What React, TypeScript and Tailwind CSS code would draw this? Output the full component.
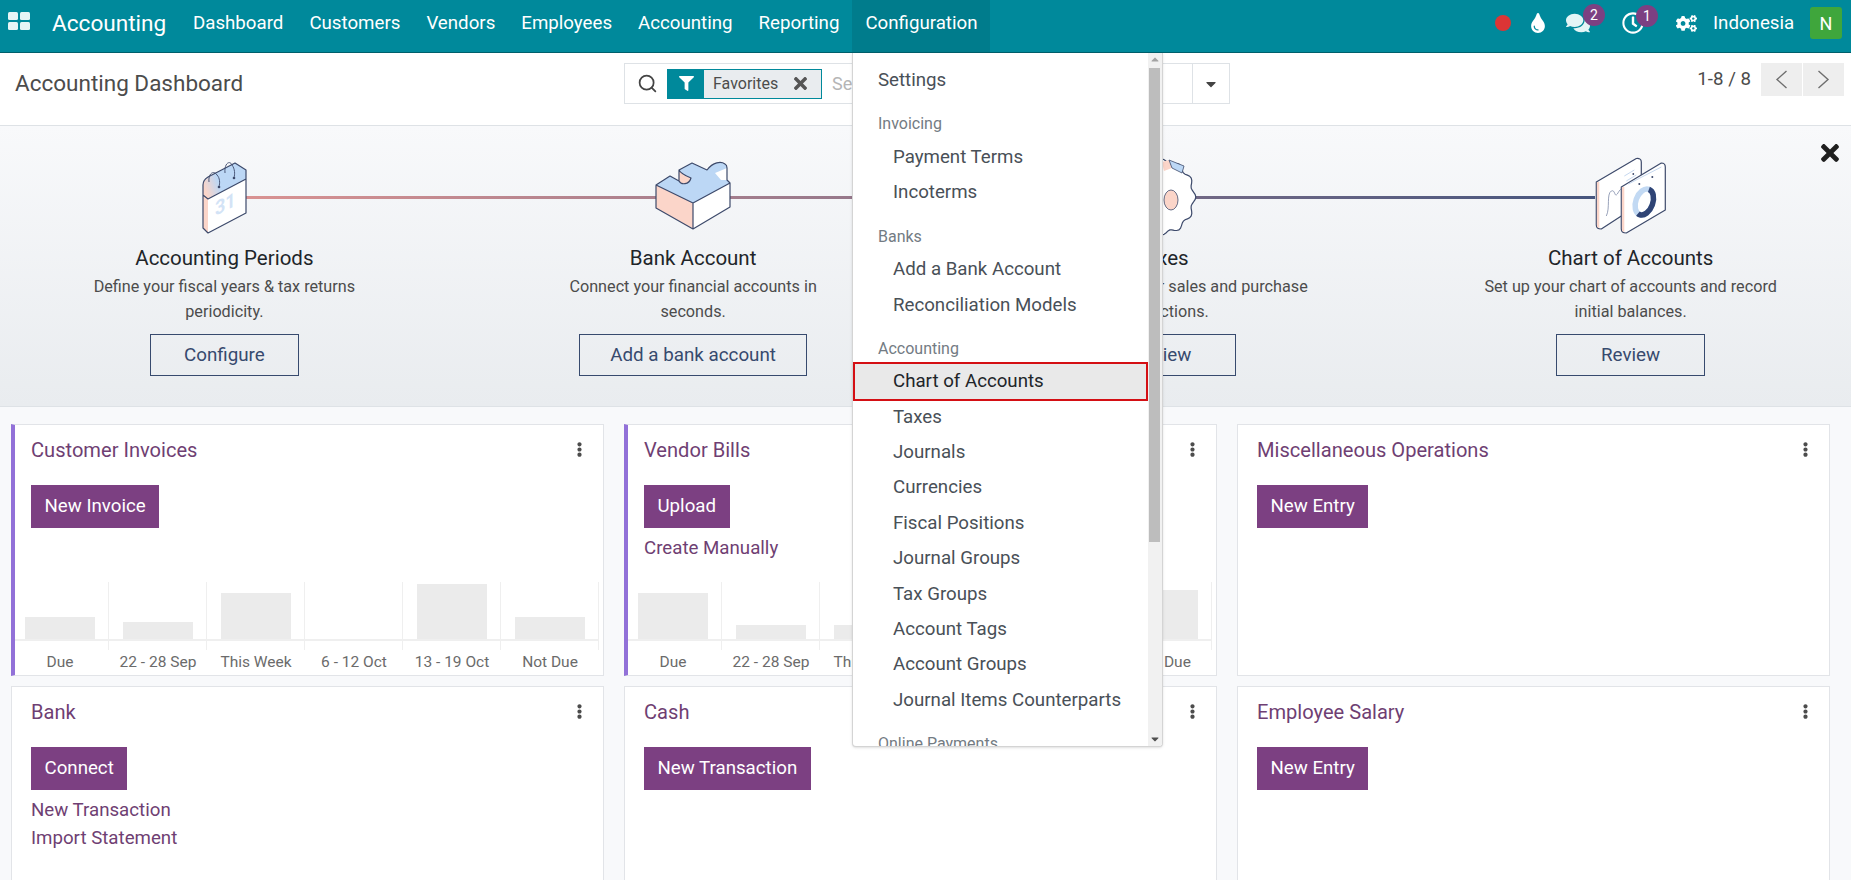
import { FaCaretDown, FaCogs, FaComments, FaEllipsisV, FaFilter, FaRegClock, FaTimes, FaTint } from "react-icons/fa";
import { Search } from "lucide-react";

const navItems = ["Dashboard", "Customers", "Vendors", "Employees", "Accounting", "Reporting"];

// gear outline for the Taxes step, mostly hidden behind the menu
const gearPath =
  Array.from({ length: 96 }, (_, i) => {
    const t = (i / 96) * Math.PI * 2;
    const r = 1 + 0.055 * Math.cos(t * 12);
    return `${i === 0 ? "M" : "L"}${(40 + 32 * r * Math.cos(t)).toFixed(1)} ${(39 + 36 * r * Math.sin(t)).toFixed(1)}`;
  }).join(" ") + " Z";

function CalendarArt() {
  return (
    <svg width="80" height="76" viewBox="0 0 80 76" className="relative z-10 overflow-visible">
      <defs>
        <linearGradient id="calBand" x1="0" x2="1" y1="0.6" y2="0.3">
          <stop offset="0" stopColor="#fbd5c9" />
          <stop offset="0.35" stopColor="#bcd7f5" />
        </linearGradient>
      </defs>
      <path d="M19 37 L24 41 L62 21 L62 55 L24 75 L19 70 Z" fill="#fff" />
      <path d="M19 37 L24 41 L24 75 L19 70 Z" fill="#fbd5c9" />
      <path d="M19 37 V27 Q19 22 24 19 L51 5 L62 12 V21 L24 41 Z" fill="url(#calBand)" />
      <path d="M19 37 L24 41 L62 21 M19 37 V70 L24 75 L62 55 V12 L51 5 L24 19 Q19 22 19 27 V37" fill="none" stroke="#3d4a6b" strokeWidth="1.2" strokeLinejoin="round" />
      <path d="M25 24 C24 15 30 12 33 17 C36 20 36 25 35 29" fill="none" stroke="#3d4a6b" strokeWidth="0.9" />
      <path d="M41 15 C40 5 46 2 48 7 C51 11 51 16 50 20" fill="none" stroke="#3d4a6b" strokeWidth="0.9" />
      <circle cx="35" cy="29" r="1.3" fill="#3d4a6b" />
      <circle cx="50" cy="20" r="1.3" fill="#3d4a6b" />
      <text transform="matrix(0.9 -0.45 0 1 31 58)" fontFamily="Roboto, sans-serif" fontSize="20" fontWeight="700" fill="#d3e3f6">31</text>
    </svg>
  );
}

function PuzzleArt() {
  return (
    <svg width="80" height="76" viewBox="0 0 80 76" className="relative z-10 overflow-visible">
      <path d="M3 27 L40 45 V71 L3 50 Z" fill="#fbd5c9" />
      <path d="M40 45 L77 25 V49 L40 71 Z" fill="#fff" />
      <path d="M3 27 L17 18 L26 23 C28 27 36 27 38 20 C33 18 28 16 26 12 L39 5 L54 12 C60 4 68 3 72 6 Q74 7 74 10 V22 L77 25 L40 45 Z" fill="#bcd7f5" />
      <path d="M62 15 L74 10 V22 L68 22 Z" fill="#fff" />
      <path d="M26 12 C28 16 33 18 38 20 C36 27 28 27 26 23 Z" fill="#fbd5c9" />
      <path
        d="M40 45 L3 27 L17 18 L26 23 V12 L39 5 L54 12 C60 4 68 3 72 6 Q74 7 74 10 V22 L77 25 L40 45 V71 M3 27 V50 L40 71 L77 49 V25 M26 23 C28 27 36 27 38 20 C33 18 28 16 26 12"
        fill="none"
        stroke="#3d4a6b"
        strokeWidth="1.2"
        strokeLinejoin="round"
      />
    </svg>
  );
}

function GearArt() {
  return (
    <svg width="80" height="76" viewBox="0 0 80 76" className="relative z-10 overflow-visible">
      <path d={gearPath} fill="#fff" stroke="#3d4a6b" strokeWidth="1.2" />
      <path d="M40 4 L47 2 L50 10 L42 13 Z" fill="#fbd5c9" />
      <path d="M47 2 L62 8 L60 15 L50 10 Z" fill="#bcd7f5" stroke="#3d4a6b" strokeWidth="0.8" />
      <ellipse cx="49" cy="42" rx="7" ry="10" fill="#fbd5c9" stroke="#3d4a6b" strokeWidth="0.8" />
    </svg>
  );
}

function ChartsArt() {
  return (
    <svg width="80" height="76" viewBox="0 0 80 76" className="relative z-10 overflow-visible">
      <g transform="translate(-6.7 0)">
        <path d="M12 24 L52 0.5 Q57 0 57 4 V45 L17 71 Q12 71 12 67 Z" fill="#fff" stroke="#3d4a6b" strokeWidth="1.2" strokeLinejoin="round" />
        <path d="M12.6 24 V67 Q12.6 70 15 70 V24 Z" fill="#fbd5c9" />
        <path d="M22 58 C26 50 22 36 27 33 C31 31 30 40 33 36 C35 33 36 30 39 31" fill="none" stroke="#7f8aa8" strokeWidth="0.8" />
        <path d="M40 18 L50 12 M42 23 L52 17" stroke="#c6d8ef" strokeWidth="1" />
        <circle cx="49" cy="16" r="0.9" fill="#3d4a6b" />
        <path d="M37 29 L77 5 Q81 5 81 9 V52 L42 75 Q37 75 37 71 Z" fill="#fff" stroke="#3d4a6b" strokeWidth="1.2" strokeLinejoin="round" />
        <path d="M37.6 29 V71 Q37.6 74 40 74 V29 Z" fill="#fbd5c9" />
        <path d="M44 26 L77 9" stroke="#c6d8ef" strokeWidth="1" />
        <circle cx="55" cy="26" r="1" fill="#3d4a6b" />
        <circle cx="68" cy="19" r="1" fill="#3d4a6b" />
        <g transform="rotate(20 60 44)">
          <ellipse cx="60" cy="44" rx="8.5" ry="13.5" fill="none" stroke="#c2d9f3" strokeWidth="5.5" />
          <ellipse cx="60" cy="44" rx="8.5" ry="13.5" fill="none" stroke="#2f4475" strokeWidth="5.5" pathLength="100" strokeDasharray="53 47" strokeDashoffset="-75" />
        </g>
      </g>
    </svg>
  );
}

const steps = [
  { title: "Accounting Periods", lines: "Define your fiscal years & tax returns periodicity.", button: "Configure", art: <CalendarArt /> },
  { title: "Bank Account", lines: "Connect your financial accounts in seconds.", button: "Add a bank account", art: <PuzzleArt /> },
  { title: "Taxes", lines: "Set default Taxes for sales and purchase transactions.", button: "Review", art: <GearArt /> },
  { title: "Chart of Accounts", lines: "Set up your chart of accounts and record initial balances.", button: "Review", art: <ChartsArt /> },
];

const labels = ["Due", "22 - 28 Sep", "This Week", "6 - 12 Oct", "13 - 19 Oct", "Not Due"];

type CardData = {
  title: string;
  button: string;
  links?: string[];
  bars?: number[];
  accent?: boolean;
};

const cards: CardData[] = [
  { title: "Customer Invoices", button: "New Invoice", bars: [22, 17, 46, 0, 55, 22], accent: true },
  { title: "Vendor Bills", button: "Upload", links: ["Create Manually"], bars: [46, 14, 14, 0, 0, 49], accent: true },
  { title: "Miscellaneous Operations", button: "New Entry" },
  { title: "Bank", button: "Connect", links: ["New Transaction", "Import Statement"] },
  { title: "Cash", button: "New Transaction" },
  { title: "Employee Salary", button: "New Entry" },
];

type MenuRow = { label: string; kind: "top" | "head" | "item" | "active" };

const menuRows: MenuRow[] = [
  { label: "Settings", kind: "top" },
  { label: "Invoicing", kind: "head" },
  { label: "Payment Terms", kind: "item" },
  { label: "Incoterms", kind: "item" },
  { label: "Banks", kind: "head" },
  { label: "Add a Bank Account", kind: "item" },
  { label: "Reconciliation Models", kind: "item" },
  { label: "Accounting", kind: "head" },
  { label: "Chart of Accounts", kind: "active" },
  { label: "Taxes", kind: "item" },
  { label: "Journals", kind: "item" },
  { label: "Currencies", kind: "item" },
  { label: "Fiscal Positions", kind: "item" },
  { label: "Journal Groups", kind: "item" },
  { label: "Tax Groups", kind: "item" },
  { label: "Account Tags", kind: "item" },
  { label: "Account Groups", kind: "item" },
  { label: "Journal Items Counterparts", kind: "item" },
  { label: "Online Payments", kind: "head" },
];

function TopNav() {
  return (
    <header className="flex h-[53px] items-center border-b border-[#005f6b] bg-[#00899b] text-white">
      <svg width="22" height="18" viewBox="0 0 22 18" className="mb-[10px] ml-[8px] shrink-0" fill="#e6f5f6">
        <rect x="0" y="0" width="10" height="8" rx="1.5" />
        <rect x="12" y="0" width="10" height="8" rx="1.5" />
        <rect x="0" y="10" width="10" height="8" rx="1.5" />
        <rect x="12" y="10" width="10" height="8" rx="1.5" />
      </svg>
      <span className="mb-[5px] ml-[22px] w-[128px] text-[22.6px]">Accounting</span>
      <nav className="flex h-full items-center text-[18.7px]">
        {navItems.map((item) => (
          <span key={item} className="mb-[6px] px-[13px]">
            {item}
          </span>
        ))}
        <span className="flex h-full items-center bg-[#007c8c] px-[13px] pb-[6px]">Configuration</span>
      </nav>
      <div className="ml-auto flex h-full items-center pb-[6px] pr-[9px]">
        <span className="flex w-[36px] justify-center">
          <span className="h-[16px] w-[16px] rounded-full bg-[#dc3535]" />
        </span>
        <span className="flex w-[34px] justify-center">
          <FaTint size={20} />
        </span>
        <span className="relative flex w-[46px] justify-center">
          <FaComments size={24} className="text-[#e3f5f6]" />
          <span className="absolute left-[28px] top-[-7px] flex h-[22px] w-[22px] items-center justify-center rounded-full bg-[#7c4082] text-[14px]">2</span>
        </span>
        <span className="relative flex w-[64px] justify-center">
          <FaRegClock size={22} />
          <span className="absolute left-[35px] top-[-7px] flex h-[22px] w-[22px] items-center justify-center rounded-full bg-[#7c4082] text-[14px]">1</span>
        </span>
        <span className="flex w-[42px] justify-center">
          <FaCogs size={21} />
        </span>
        <span className="ml-[6px] w-[97px] text-[18.7px]">Indonesia</span>
        <span className="flex h-[32px] w-[32px] items-center justify-center rounded-[3px] bg-[#3fa63c] text-[18px]">N</span>
      </div>
    </header>
  );
}

function PagerArrow({ d }: { d: string }) {
  return (
    <svg width="13" height="19" viewBox="0 0 13 19" fill="none" stroke="#6e6e6e" strokeWidth="1.4">
      <path d={d} />
    </svg>
  );
}

function SubBar() {
  return (
    <div className="flex h-[73px] items-start border-b border-[#dee2e6] bg-white pl-[15px]">
      <h1 className="flex h-[62px] w-[609px] items-center text-[22.5px] text-[#4c4c4c]">Accounting Dashboard</h1>
      <div className="mt-[10px] flex h-[41px] w-[606px] items-center border border-[#dee2e6]">
        <span className="ml-[12px] w-[30px] text-[#444]">
          <Search size={21} strokeWidth={2} />
        </span>
        <div className="flex h-[30px] w-[155px] border border-[#00899b] text-[16px]">
          <span className="flex w-[36px] items-center justify-center bg-[#00899b] text-white">
            <FaFilter size={15} />
          </span>
          <span className="flex flex-1 items-center bg-[#e9ecef] pl-[9px] text-[#4c4c4c]">
            Favorites
            <FaTimes size={19} className="ml-[13px] text-[#555]" />
          </span>
        </div>
        <span className="ml-[10px] text-[18px] text-[#b5b5b5]">Search...</span>
        <span className="ml-auto flex h-full w-[37px] items-center justify-center border-l border-[#dee2e6] text-[#444]">
          <FaCaretDown size={16} />
        </span>
      </div>
      <div className="ml-auto mt-[10px] flex h-[33px] items-center pr-[7px]">
        <span className="mr-[10px] text-[18.7px] text-[#4c4c4c]">1-8 / 8</span>
        <span className="flex h-full w-[41px] items-center justify-center bg-[#eeeeee]">
          <PagerArrow d="M11.5 1 L2 9.5 L11.5 18" />
        </span>
        <span className="ml-px flex h-full w-[41px] items-center justify-center bg-[#eeeeee]">
          <PagerArrow d="M1.5 1 L11 9.5 L1.5 18" />
        </span>
      </div>
    </div>
  );
}

function Banner() {
  return (
    <section className="relative h-[281px] overflow-hidden border-b border-[#dee2e6] bg-gradient-to-b from-[#f8f9fb] to-[#e9ecef]">
      <div className="absolute left-[246px] top-[70px] h-[3px] w-[1349px] bg-gradient-to-r from-[#d99292] to-[#46557e]" />
      <FaTimes size={26} className="absolute right-[8px] top-[14px] text-[#1f1f1f]" />
      <div className="-ml-[10px] grid w-[1875px] grid-cols-4 pt-[32px]">
        {steps.map((s) => (
          <div key={s.title} className="flex flex-col items-center text-center">
            {s.art}
            <h3 className="mt-[10px] text-[20.5px] leading-[28px] text-[#212529]">{s.title}</h3>
            <p className="mt-[3px] max-w-[300px] text-[16.2px] leading-[24.5px] text-[#4c4c4c]">{s.lines}</p>
            <button className="mt-[10px] h-[42px] min-w-[149px] border border-[#374a6e] px-[30px] text-[18.8px] text-[#374a6e]">{s.button}</button>
          </div>
        ))}
      </div>
    </section>
  );
}

function MiniChart({ bars }: { bars: number[] }) {
  return (
    <div className="mt-auto -ml-[20px] flex w-[588px]">
      {bars.map((h, i) => (
        <div key={labels[i]} className="flex w-[98px] shrink-0 flex-col">
          <div className="h-[68px] border-r border-[#efefef]">
            <div className="flex h-[59px] items-end justify-center border-b-2 border-[#efefef]">
              <div className="w-[70px] bg-[#ebebeb]" style={{ height: h }} />
            </div>
          </div>
          <div className="h-[25px] whitespace-nowrap text-center text-[15.5px] leading-[25px] text-[#6b6b6b]">{labels[i]}</div>
        </div>
      ))}
    </div>
  );
}

function Card({ title, button, links, bars, accent }: CardData) {
  return (
    <div className={`flex flex-col overflow-hidden border border-[#e2e4e8] bg-white ${accent ? "border-l-4 border-l-[#9271d8] pl-[16px]" : "pl-[19px]"}`}>
      <div className="flex h-[49.5px] shrink-0 items-center justify-between pr-[16px]">
        <span className="text-[20.1px] text-[#6f3f73]">{title}</span>
        <FaEllipsisV size={15} className="text-[#4c4c4c]" />
      </div>
      <button className="mt-[10.5px] h-[43px] w-fit shrink-0 bg-[#7c4082] px-[13.5px] text-[18.7px] text-white">{button}</button>
      {links && (
        <div className="mt-[5.5px] flex flex-col text-[18.7px] leading-[28px] text-[#6f3f73]">
          {links.map((l) => (
            <span key={l}>{l}</span>
          ))}
        </div>
      )}
      {bars && <MiniChart bars={bars} />}
    </div>
  );
}

function ConfigMenu() {
  return (
    <div className="absolute left-[852px] top-[53px] z-20 flex h-[694px] w-[311px] overflow-hidden rounded-b-[4px] border border-t-0 border-[#d4d4d4] bg-white text-[18.7px] text-[#495057] shadow-sm">
      <ul className="flex-1 overflow-hidden pt-[9px]">
        {menuRows.map((r) => {
          if (r.kind === "head") {
            return (
              <li key={r.label} className="mt-[11.7px] flex h-[30px] items-center pl-[25px] text-[16px] text-[#737b83]">
                {r.label}
              </li>
            );
          }
          if (r.kind === "active") {
            return (
              <li key={r.label} className="-my-[2px] flex h-[39px] items-center border-2 border-[#d40f14] bg-[#e9e9e9] pl-[38px] text-[#212529]">
                {r.label}
              </li>
            );
          }
          return (
            <li key={r.label} className={`flex h-[35.4px] items-center ${r.kind === "top" ? "pl-[25px]" : "pl-[40px]"}`}>
              {r.label}
            </li>
          );
        })}
      </ul>
      <div className="relative w-[14px] shrink-0 bg-[#f1f1f1]">
        <FaCaretDown size={12} className="absolute left-[1px] top-[1px] rotate-180 text-[#a3a3a3]" />
        <div className="ml-[1px] mt-[15px] h-[474px] w-[11px] bg-[#bdbdbd]" />
        <FaCaretDown size={12} className="absolute bottom-[1px] left-[1px] text-[#505050]" />
      </div>
    </div>
  );
}

export default function App() {
  return (
    <div className="relative h-[880px] w-[1851px] overflow-hidden bg-[#f8f9fb] [font-family:Roboto,sans-serif]">
      <TopNav />
      <SubBar />
      <Banner />
      <main className="grid grid-cols-3 grid-rows-[252px_252px] gap-x-[20px] gap-y-[10px] pl-[11px] pr-[21px] pt-[17px]">
        {cards.map((c) => (
          <Card key={c.title} {...c} />
        ))}
      </main>
      <ConfigMenu />
    </div>
  );
}
